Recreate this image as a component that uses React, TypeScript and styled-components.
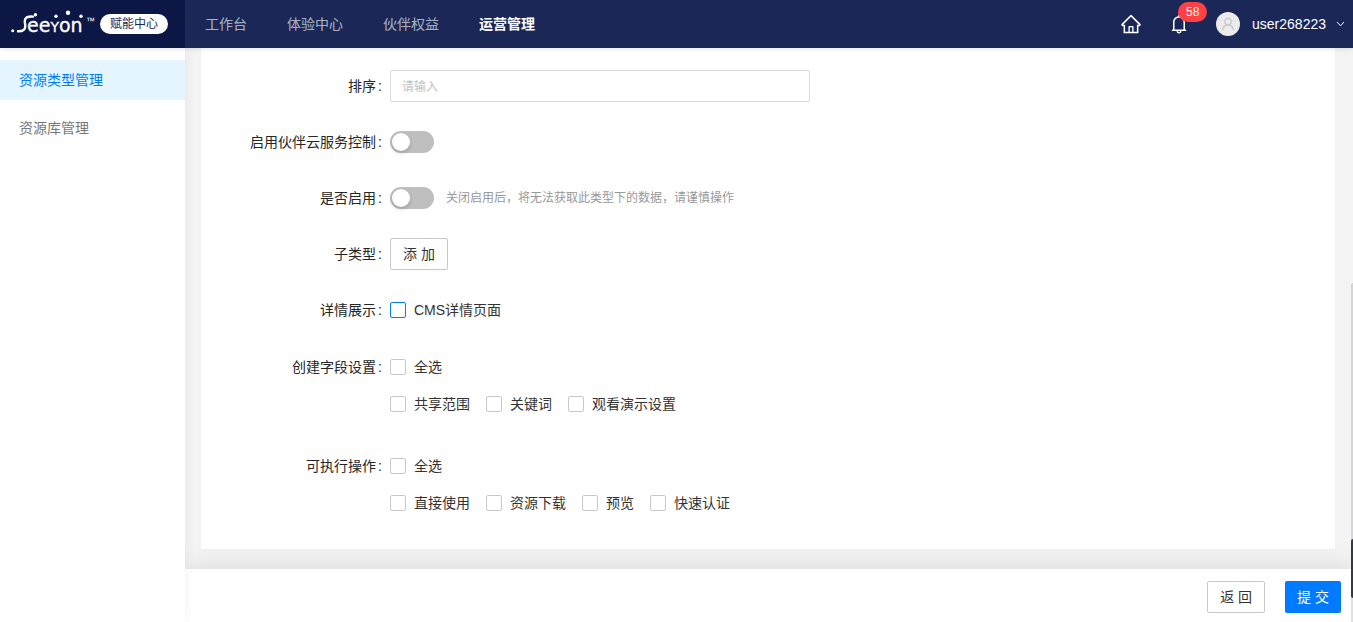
import React from "react";
import styled, { createGlobalStyle, css } from "styled-components";
import { AiOutlineBell, AiOutlineHome, AiOutlineUser } from "react-icons/ai";

const GlobalStyle = createGlobalStyle`
  *, *::before, *::after { box-sizing: border-box; }
  body {
    margin: 0;
    color: #333;
    background: #f3f3f3;
    font: 14px/20px "Liberation Sans", "Noto Sans CJK SC", sans-serif;
  }
  button, input { font: inherit; }
  a { color: inherit; text-decoration: none; }
`;

const Page = styled.div`
  display: flex;
  flex-direction: column;
  min-height: 100vh;
`;

const Header = styled.header`
  position: relative;
  z-index: 2;
  display: flex;
  height: 48px;
  background: #1b2857;
  color: #fff;
  box-shadow: 0 1px 4px rgba(0, 21, 41, 0.12);
`;

const Brand = styled.a`
  display: flex;
  flex: none;
  align-items: center;
  gap: 4px;
  width: 185px;
  padding-left: 10px;
  background: #0c1746;
`;

const BrandTag = styled.span`
  padding: 0 10px;
  border-radius: 10px;
  background: #fff;
  color: #1b2857;
  font-size: 12px;
  line-height: 20px;
`;

const Nav = styled.nav`
  display: flex;
  flex: 1;
  align-items: center;
  gap: 40px;
  padding-left: 20px;
`;

const NavLink = styled.a<{ $active?: boolean }>`
  color: ${(p) => (p.$active ? "#fff" : "rgba(255, 255, 255, 0.65)")};
  font-weight: ${(p) => (p.$active ? 700 : 400)};
`;

const Tools = styled.div`
  display: flex;
  align-items: center;
  padding-right: 8px;
`;

const IconButton = styled.button`
  position: relative;
  display: flex;
  margin-right: 26px;
  padding: 0;
  border: 0;
  background: none;
  color: #fff;
  font-size: 22px;
`;

const Badge = styled.span`
  position: absolute;
  top: -11px;
  left: 10px;
  padding: 0 8px;
  border-radius: 10px;
  background: #ff4144;
  font-size: 12px;
  font-weight: 400;
  line-height: 20px;
`;

const UserButton = styled.button`
  display: flex;
  align-items: center;
  padding: 0;
  border: 0;
  background: none;
  color: #fff;
`;

const Avatar = styled.span`
  display: grid;
  place-items: center;
  width: 24px;
  height: 24px;
  margin-right: 12px;
  border-radius: 50%;
  background: #ebebeb;
  color: #c4c4c4;
  font-size: 16px;
`;

const Chevron = styled.svg`
  margin-left: 10px;
`;

const Body = styled.div`
  display: flex;
  flex: 1;
`;

const Sidebar = styled.aside`
  position: relative;
  z-index: 1;
  flex: none;
  width: 185px;
  padding-top: 12px;
  background: #fff;
  box-shadow: 0 0 12px rgba(0, 0, 0, 0.06);
`;

const SideLink = styled.a<{ $active?: boolean }>`
  display: block;
  margin-bottom: 8px;
  padding-left: 19px;
  line-height: 40px;
  color: ${(p) => (p.$active ? "#007bff" : "#777")};
  background: ${(p) => (p.$active ? "#e4f5ff" : "none")};
`;

const Content = styled.div`
  display: flex;
  flex: 1;
  flex-direction: column;
  min-width: 0;
`;

const Main = styled.main`
  display: flex;
  flex: 1;
  padding: 0 18px 20px 16px;
`;

const Form = styled.form`
  flex: 1;
  padding: 22px 0 0;
  background: #fff;
`;

const Row = styled.div`
  display: flex;
  margin-bottom: 24px;
`;

const labelStyle = css<{ $tall?: boolean }>`
  flex: none;
  width: 16.6667%;
  padding-right: 8px;
  color: #262626;
  text-align: right;
  line-height: ${(p) => (p.$tall ? 34 : 32)}px;

  &::after {
    content: ":";
    margin-left: 2px;
  }
`;

const FieldLabel = styled.label`
  ${labelStyle}
`;

const GroupLabel = styled.span<{ $tall?: boolean }>`
  ${labelStyle}
`;

const Control = styled.div`
  display: flex;
  align-items: center;
  gap: 12px;
  min-height: 32px;
`;

const TextInput = styled.input`
  width: 420px;
  height: 32px;
  padding: 1px 11px 0;
  border: 1px solid #d9d9d9;
  border-radius: 2px;
  font-size: 12px;
  outline: none;

  &::placeholder {
    color: #bfbfbf;
  }
`;

const Switch = styled.input.attrs({ type: "checkbox", role: "switch" })`
  appearance: none;
  width: 44px;
  height: 22px;
  margin: 0;
  padding: 2px;
  border-radius: 11px;
  background: #bfbfbf;

  &::before {
    content: "";
    display: block;
    width: 18px;
    height: 18px;
    border-radius: 50%;
    background: #fff;
    box-shadow: 0 2px 4px rgba(0, 35, 11, 0.2);
  }

  &:checked {
    background: #007bff;
  }

  &:checked::before {
    margin-left: auto;
  }
`;

const Hint = styled.span`
  color: #999;
  font-size: 12px;
`;

const Button = styled.button<{ $primary?: boolean }>`
  height: 32px;
  padding: 0 12px;
  border: ${(p) => (p.$primary ? "0" : "1px solid #c9c9c9")};
  border-radius: 2px;
  background: ${(p) => (p.$primary ? "#007bff" : "#fff")};
  color: ${(p) => (p.$primary ? "#fff" : "#333")};
`;

const CheckLabel = styled.label`
  display: flex;
  align-items: center;
  gap: 8px;
`;

const CheckInput = styled.input.attrs({ type: "checkbox" })<{ $accent?: boolean }>`
  appearance: none;
  width: 16px;
  height: 16px;
  margin: 0;
  border: 1px solid ${(p) => (p.$accent ? "#007bff" : "#c9c9c9")};
  border-radius: 2px;
  background: #fff;

  &:checked {
    background: #007bff;
  }
`;

const CheckLine = styled.div`
  display: flex;
  gap: 16px;
  line-height: 34px;

  & + & {
    padding-bottom: 1px;
    line-height: 40px;
  }
`;

const Footer = styled.footer`
  display: flex;
  justify-content: flex-end;
  gap: 20px;
  padding: 12px 12px 9px;
  background: #fff;
  box-shadow: 0 -2px 24px rgba(0, 0, 0, 0.1);
`;

const ScrollThumb = styled.div`
  position: fixed;
  right: 0;
  bottom: 0;
  z-index: 3;
  width: 2px;
  height: 339px;
  border-radius: 2px 0 0 0;
  background: rgba(0, 0, 0, 0.12);
`;

const DockHandle = styled.div`
  position: fixed;
  right: 0;
  bottom: 24px;
  z-index: 4;
  width: 2px;
  height: 59px;
  border-radius: 2px 0 0 2px;
  background: #333846;
`;

function Logo() {
  return (
    <svg width="86" height="28" viewBox="0 0 86 28" fill="#fff" aria-label="Seeyon">
      <circle cx="2.700" cy="20.700" r="1.500" />
      <circle cx="25.400" cy="4.700" r="1.700" />
      <circle cx="46" cy="6.300" r="1.700" />
      <circle cx="58" cy="2.700" r="2.200" />
      <circle cx="71" cy="6.200" r="1.700" />
      <path
        d="M8 21.300 C13 21.500 15.500 19.500 15.300 15.500 C15 12.500 14.200 11.500 15.200 9.200 C16.200 7 19 6.300 23 6.600"
        fill="none"
        stroke="#fff"
        strokeWidth="2.400"
        strokeLinecap="round"
      />
      <text
        x="17"
        y="22"
        fontFamily="DejaVu Sans, sans-serif"
        fontSize="19"
        stroke="#fff"
        strokeWidth="0.300"
      >
        ee<tspan fontSize="14">Y</tspan>on
      </text>
      <text x="76" y="14" fontFamily="Liberation Sans, sans-serif" fontSize="9">
        ™
      </text>
    </svg>
  );
}

const navItems = ["工作台", "体验中心", "伙伴权益", "运营管理"];
const sideItems = ["资源类型管理", "资源库管理"];
const checkGroups = [
  { label: "创建字段设置", options: ["共享范围", "关键词", "观看演示设置"] },
  { label: "可执行操作", options: ["直接使用", "资源下载", "预览", "快速认证"] },
];

function Check({ text, accent }: { text: string; accent?: boolean }) {
  return (
    <CheckLabel>
      <CheckInput $accent={accent} />
      {text}
    </CheckLabel>
  );
}

export default function App() {
  return (
    <Page>
      <GlobalStyle />
      <Header>
        <Brand href="#">
          <Logo />
          <BrandTag>赋能中心</BrandTag>
        </Brand>
        <Nav>
          {navItems.map((item) => (
            <NavLink key={item} href="#" $active={item === "运营管理"}>
              {item}
            </NavLink>
          ))}
        </Nav>
        <Tools>
          <IconButton aria-label="首页">
            <AiOutlineHome />
          </IconButton>
          <IconButton aria-label="通知">
            <AiOutlineBell />
            <Badge>58</Badge>
          </IconButton>
          <UserButton>
            <Avatar>
              <AiOutlineUser />
            </Avatar>
            user268223
            <Chevron width="9" height="6" viewBox="0 0 9 6" fill="none" stroke="#fff">
              <path d="M1 1 L4.500 4.800 L8 1" />
            </Chevron>
          </UserButton>
        </Tools>
      </Header>
      <Body>
        <Sidebar>
          {sideItems.map((item, i) => (
            <SideLink key={item} href="#" $active={i === 0}>
              {item}
            </SideLink>
          ))}
        </Sidebar>
        <Content>
          <Main>
            <Form id="resource-form">
              <Row>
                <FieldLabel htmlFor="order">排序</FieldLabel>
                <TextInput id="order" placeholder="请输入" />
              </Row>
              <Row>
                <FieldLabel htmlFor="cloud">启用伙伴云服务控制</FieldLabel>
                <Control>
                  <Switch id="cloud" />
                </Control>
              </Row>
              <Row>
                <FieldLabel htmlFor="enabled">是否启用</FieldLabel>
                <Control>
                  <Switch id="enabled" />
                  <Hint>关闭启用后，将无法获取此类型下的数据，请谨慎操作</Hint>
                </Control>
              </Row>
              <Row>
                <FieldLabel htmlFor="subtype">子类型</FieldLabel>
                <Button id="subtype" type="button">
                  添 加
                </Button>
              </Row>
              <Row>
                <GroupLabel>详情展示</GroupLabel>
                <Control>
                  <Check text="CMS详情页面" accent />
                </Control>
              </Row>
              {checkGroups.map((group) => (
                <Row key={group.label} role="group" aria-label={group.label}>
                  <GroupLabel $tall>{group.label}</GroupLabel>
                  <div>
                    <CheckLine>
                      <Check text="全选" />
                    </CheckLine>
                    <CheckLine>
                      {group.options.map((option) => (
                        <Check key={option} text={option} />
                      ))}
                    </CheckLine>
                  </div>
                </Row>
              ))}
            </Form>
          </Main>
          <Footer>
            <Button type="button">返 回</Button>
            <Button type="submit" form="resource-form" $primary>
              提 交
            </Button>
          </Footer>
        </Content>
      </Body>
      <ScrollThumb />
      <DockHandle />
    </Page>
  );
}
